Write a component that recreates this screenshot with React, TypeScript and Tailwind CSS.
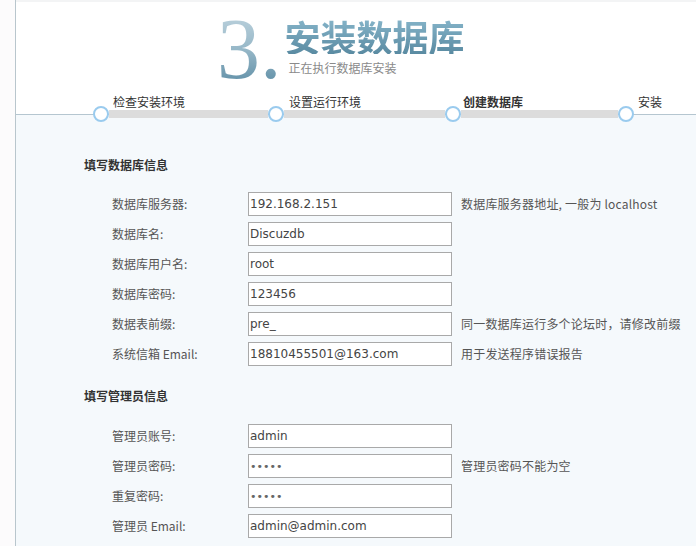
import React from "react";

const cjk = { fontFamily: '"Noto Sans CJK SC", "Noto Sans", sans-serif' };
const latin = { fontFamily: '"DejaVu Sans", Verdana, sans-serif' };

type Row = { label: string; value: string; hint?: string };

const dbRows: Row[] = [
  { label: "数据库服务器:", value: "192.168.2.151", hint: "数据库服务器地址, 一般为 localhost" },
  { label: "数据库名:", value: "Discuzdb" },
  { label: "数据库用户名:", value: "root" },
  { label: "数据库密码:", value: "123456" },
  { label: "数据表前缀:", value: "pre_", hint: "同一数据库运行多个论坛时，请修改前缀" },
  { label: "系统信箱 Email:", value: "18810455501@163.com", hint: "用于发送程序错误报告" },
];

const adminRows: Row[] = [
  { label: "管理员账号:", value: "admin" },
  { label: "管理员密码:", value: "•••••", hint: "管理员密码不能为空" },
  { label: "重复密码:", value: "•••••" },
  { label: "管理员 Email:", value: "admin@admin.com" },
];

function FormRow({ row }: { row: Row }) {
  const isDots = row.value.startsWith("•");
  return (
    <div className="flex items-center h-[30px]">
      <div className="w-[136px] text-[12px] text-[#555]" style={cjk}>
        {row.label}
      </div>
      <input
        readOnly
        value={row.value}
        className={`w-[204px] h-[24px] border border-[#a9a9a9] bg-white pl-[1px] outline-none ${
          isDots ? "text-[11px] text-[#666]" : "text-[12px] text-[#444]"
        }`}
        style={latin}
      />
      {row.hint && (
        <div className="ml-[9px] text-[12px] tracking-[0.2px] text-[#555] whitespace-nowrap" style={cjk}>
          {row.hint}
        </div>
      )}
    </div>
  );
}

function Circle({ active }: { active?: boolean }) {
  return (
    <div
      className={`w-[16px] h-[16px] rounded-full border-2 shrink-0 ${
        active ? "border-[#b6dcf3] bg-[#4a9ee0]" : "border-[#9acbee] bg-white"
      }`}
    />
  );
}

function Bar({ w }: { w: string }) {
  return <div className={`${w} h-[8px] bg-[#dcdcdc] shrink-0`} />;
}

export default function App() {
  return (
    <div className="w-[696px] h-[546px] overflow-hidden bg-[#fcfbfc] flex">
      <div className="w-[15px] shrink-0 bg-[#fcfbfc]" />
      <div className="flex-1 flex flex-col border-l border-[#b9c6cd]">
        {/* header */}
        <div className="bg-white h-[114px] flex flex-col border-t-[2px] border-[#f3f4f5]">
          <div className="flex pl-[201px] pt-[4px]">
            <div
              className="text-[86px] leading-[86px] bg-gradient-to-b from-[#c4d7e1] via-[#97b8c8] to-[#5587a0] bg-clip-text text-transparent"
              style={{ fontFamily: '"Liberation Serif", "Times New Roman", serif' }}
            >
              3.
            </div>
            <div className="ml-[3px] flex flex-col pt-[12px]">
              <div
                className="text-[36px] leading-[36px] font-bold bg-gradient-to-b from-[#86b5ca] to-[#5a8ba2] bg-clip-text text-transparent"
                style={cjk}
              >
                安装数据库
              </div>
              <div className="ml-[4px] mt-[6px] text-[12px] leading-[16px] text-[#8a8a8a]" style={cjk}>
                正在执行数据库安装
              </div>
            </div>
          </div>
          <div className="flex pl-[97px] mt-auto mb-[5px] text-[12px] leading-[14px] text-[#333]" style={cjk}>
            <span className="w-[176px]">检查安装环境</span>
            <span className="w-[174px]">设置运行环境</span>
            <span className="w-[175px] font-bold">创建数据库</span>
            <span>安装</span>
          </div>
        </div>
        {/* panel */}
        <div className="flex-1 bg-[#f5f9fc] border-t border-[#b5c6d0] flex flex-col">
          <div className="flex items-center h-[16px] -mt-[9px] pl-[77px]">
            <Circle />
            <Bar w="w-[159px]" />
            <Circle />
            <Bar w="w-[161px]" />
            <Circle />
            <Bar w="w-[157px]" />
            <Circle />
          </div>
          <div className="pl-[68px] mt-[33px] text-[12px] leading-[20px] font-bold text-[#333]" style={cjk}>
            填写数据库信息
          </div>
          <div className="pl-[96px] mt-[14px] flex flex-col">
            {dbRows.map((r) => (
              <FormRow key={r.label} row={r} />
            ))}
          </div>
          <div className="pl-[68px] mt-[17px] text-[12px] leading-[20px] font-bold text-[#333]" style={cjk}>
            填写管理员信息
          </div>
          <div className="pl-[96px] mt-[15px] flex flex-col">
            {adminRows.map((r) => (
              <FormRow key={r.label} row={r} />
            ))}
          </div>
        </div>
      </div>
    </div>
  );
}
